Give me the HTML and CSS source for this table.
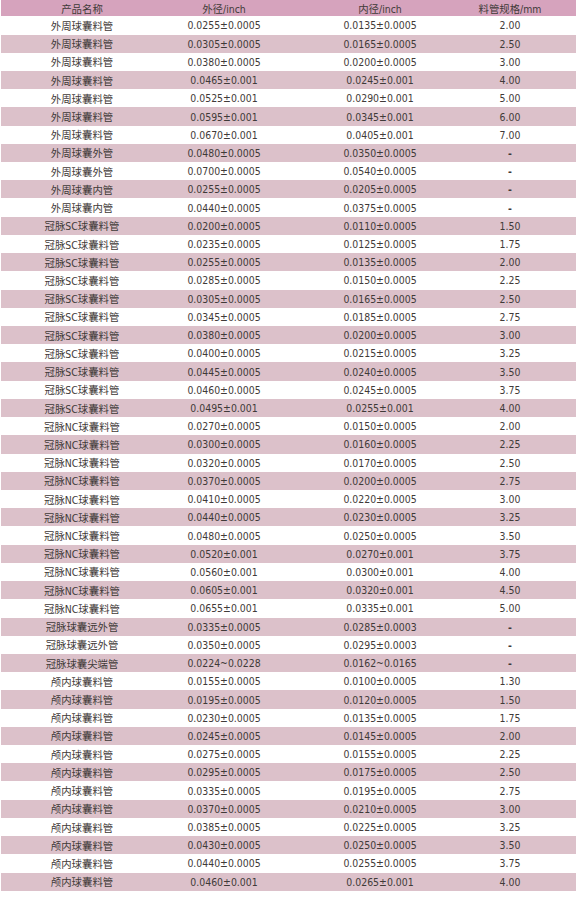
FILE: index.html
```html
<!DOCTYPE html>
<html lang="zh">
<head>
<meta charset="utf-8">
<title>球囊料管规格</title>
<link rel="stylesheet" href="styles.css">
</head>
<body>
<div class="spec">
  <div class="row head"><span>产品名称</span><span>外径/inch</span><span>内径/inch</span><span class="mm">料管规格/mm</span></div>
  <div class="row"><span>外周球囊料管</span><span>0.0255±0.0005</span><span>0.0135±0.0005</span><span class="mm">2.00</span></div>
  <div class="row alt"><span>外周球囊料管</span><span>0.0305±0.0005</span><span>0.0165±0.0005</span><span class="mm">2.50</span></div>
  <div class="row"><span>外周球囊料管</span><span>0.0380±0.0005</span><span>0.0200±0.0005</span><span class="mm">3.00</span></div>
  <div class="row alt"><span>外周球囊料管</span><span>0.0465±0.001</span><span>0.0245±0.001</span><span class="mm">4.00</span></div>
  <div class="row"><span>外周球囊料管</span><span>0.0525±0.001</span><span>0.0290±0.001</span><span class="mm">5.00</span></div>
  <div class="row alt"><span>外周球囊料管</span><span>0.0595±0.001</span><span>0.0345±0.001</span><span class="mm">6.00</span></div>
  <div class="row"><span>外周球囊料管</span><span>0.0670±0.001</span><span>0.0405±0.001</span><span class="mm">7.00</span></div>
  <div class="row alt"><span>外周球囊外管</span><span>0.0480±0.0005</span><span>0.0350±0.0005</span><span class="mm dash">-</span></div>
  <div class="row"><span>外周球囊外管</span><span>0.0700±0.0005</span><span>0.0540±0.0005</span><span class="mm dash">-</span></div>
  <div class="row alt"><span>外周球囊内管</span><span>0.0255±0.0005</span><span>0.0205±0.0005</span><span class="mm dash">-</span></div>
  <div class="row"><span>外周球囊内管</span><span>0.0440±0.0005</span><span>0.0375±0.0005</span><span class="mm dash">-</span></div>
  <div class="row alt"><span>冠脉SC球囊料管</span><span>0.0200±0.0005</span><span>0.0110±0.0005</span><span class="mm">1.50</span></div>
  <div class="row"><span>冠脉SC球囊料管</span><span>0.0235±0.0005</span><span>0.0125±0.0005</span><span class="mm">1.75</span></div>
  <div class="row alt"><span>冠脉SC球囊料管</span><span>0.0255±0.0005</span><span>0.0135±0.0005</span><span class="mm">2.00</span></div>
  <div class="row"><span>冠脉SC球囊料管</span><span>0.0285±0.0005</span><span>0.0150±0.0005</span><span class="mm">2.25</span></div>
  <div class="row alt"><span>冠脉SC球囊料管</span><span>0.0305±0.0005</span><span>0.0165±0.0005</span><span class="mm">2.50</span></div>
  <div class="row"><span>冠脉SC球囊料管</span><span>0.0345±0.0005</span><span>0.0185±0.0005</span><span class="mm">2.75</span></div>
  <div class="row alt"><span>冠脉SC球囊料管</span><span>0.0380±0.0005</span><span>0.0200±0.0005</span><span class="mm">3.00</span></div>
  <div class="row"><span>冠脉SC球囊料管</span><span>0.0400±0.0005</span><span>0.0215±0.0005</span><span class="mm">3.25</span></div>
  <div class="row alt"><span>冠脉SC球囊料管</span><span>0.0445±0.0005</span><span>0.0240±0.0005</span><span class="mm">3.50</span></div>
  <div class="row"><span>冠脉SC球囊料管</span><span>0.0460±0.0005</span><span>0.0245±0.0005</span><span class="mm">3.75</span></div>
  <div class="row alt"><span>冠脉SC球囊料管</span><span>0.0495±0.001</span><span>0.0255±0.001</span><span class="mm">4.00</span></div>
  <div class="row"><span>冠脉NC球囊料管</span><span>0.0270±0.0005</span><span>0.0150±0.0005</span><span class="mm">2.00</span></div>
  <div class="row alt"><span>冠脉NC球囊料管</span><span>0.0300±0.0005</span><span>0.0160±0.0005</span><span class="mm">2.25</span></div>
  <div class="row"><span>冠脉NC球囊料管</span><span>0.0320±0.0005</span><span>0.0170±0.0005</span><span class="mm">2.50</span></div>
  <div class="row alt"><span>冠脉NC球囊料管</span><span>0.0370±0.0005</span><span>0.0200±0.0005</span><span class="mm">2.75</span></div>
  <div class="row"><span>冠脉NC球囊料管</span><span>0.0410±0.0005</span><span>0.0220±0.0005</span><span class="mm">3.00</span></div>
  <div class="row alt"><span>冠脉NC球囊料管</span><span>0.0440±0.0005</span><span>0.0230±0.0005</span><span class="mm">3.25</span></div>
  <div class="row"><span>冠脉NC球囊料管</span><span>0.0480±0.0005</span><span>0.0250±0.0005</span><span class="mm">3.50</span></div>
  <div class="row alt"><span>冠脉NC球囊料管</span><span>0.0520±0.001</span><span>0.0270±0.001</span><span class="mm">3.75</span></div>
  <div class="row"><span>冠脉NC球囊料管</span><span>0.0560±0.001</span><span>0.0300±0.001</span><span class="mm">4.00</span></div>
  <div class="row alt"><span>冠脉NC球囊料管</span><span>0.0605±0.001</span><span>0.0320±0.001</span><span class="mm">4.50</span></div>
  <div class="row"><span>冠脉NC球囊料管</span><span>0.0655±0.001</span><span>0.0335±0.001</span><span class="mm">5.00</span></div>
  <div class="row alt"><span>冠脉球囊远外管</span><span>0.0335±0.0005</span><span>0.0285±0.0003</span><span class="mm dash">-</span></div>
  <div class="row"><span>冠脉球囊远外管</span><span>0.0350±0.0005</span><span>0.0295±0.0003</span><span class="mm dash">-</span></div>
  <div class="row alt"><span>冠脉球囊尖端管</span><span>0.0224~0.0228</span><span>0.0162~0.0165</span><span class="mm dash">-</span></div>
  <div class="row"><span>颅内球囊料管</span><span>0.0155±0.0005</span><span>0.0100±0.0005</span><span class="mm">1.30</span></div>
  <div class="row alt"><span>颅内球囊料管</span><span>0.0195±0.0005</span><span>0.0120±0.0005</span><span class="mm">1.50</span></div>
  <div class="row"><span>颅内球囊料管</span><span>0.0230±0.0005</span><span>0.0135±0.0005</span><span class="mm">1.75</span></div>
  <div class="row alt"><span>颅内球囊料管</span><span>0.0245±0.0005</span><span>0.0145±0.0005</span><span class="mm">2.00</span></div>
  <div class="row"><span>颅内球囊料管</span><span>0.0275±0.0005</span><span>0.0155±0.0005</span><span class="mm">2.25</span></div>
  <div class="row alt"><span>颅内球囊料管</span><span>0.0295±0.0005</span><span>0.0175±0.0005</span><span class="mm">2.50</span></div>
  <div class="row"><span>颅内球囊料管</span><span>0.0335±0.0005</span><span>0.0195±0.0005</span><span class="mm">2.75</span></div>
  <div class="row alt"><span>颅内球囊料管</span><span>0.0370±0.0005</span><span>0.0210±0.0005</span><span class="mm">3.00</span></div>
  <div class="row"><span>颅内球囊料管</span><span>0.0385±0.0005</span><span>0.0225±0.0005</span><span class="mm">3.25</span></div>
  <div class="row alt"><span>颅内球囊料管</span><span>0.0430±0.0005</span><span>0.0250±0.0005</span><span class="mm">3.50</span></div>
  <div class="row"><span>颅内球囊料管</span><span>0.0440±0.0005</span><span>0.0255±0.0005</span><span class="mm">3.75</span></div>
  <div class="row alt"><span>颅内球囊料管</span><span>0.0460±0.001</span><span>0.0265±0.001</span><span class="mm">4.00</span></div>
</div>
</body>
</html>
```

FILE: styles.css
```css
html, body {
  margin: 0;
  padding: 0;
  background: #ffffff;
}

body {
  font-family: "DejaVu Sans Condensed", "Noto Sans CJK SC", sans-serif;
  font-size: 10.4px;
  color: #3f3a38;
}

.spec {
  display: flex;
  flex-direction: column;
  width: 575px;
  margin-left: 1px;
}

.row {
  display: grid;
  grid-template-columns: 162px 122px 190px 1fr;
  align-items: center;
  height: 18.23px;
  text-align: center;
  white-space: nowrap;
}

.row.head {
  height: 16.3px;
  background: #d6a3bd;
}

.row.alt {
  background: #dcc1ca;
}

.mm {
  padding-right: 31px;
}

.dash {
  font-weight: bold;
}
```
